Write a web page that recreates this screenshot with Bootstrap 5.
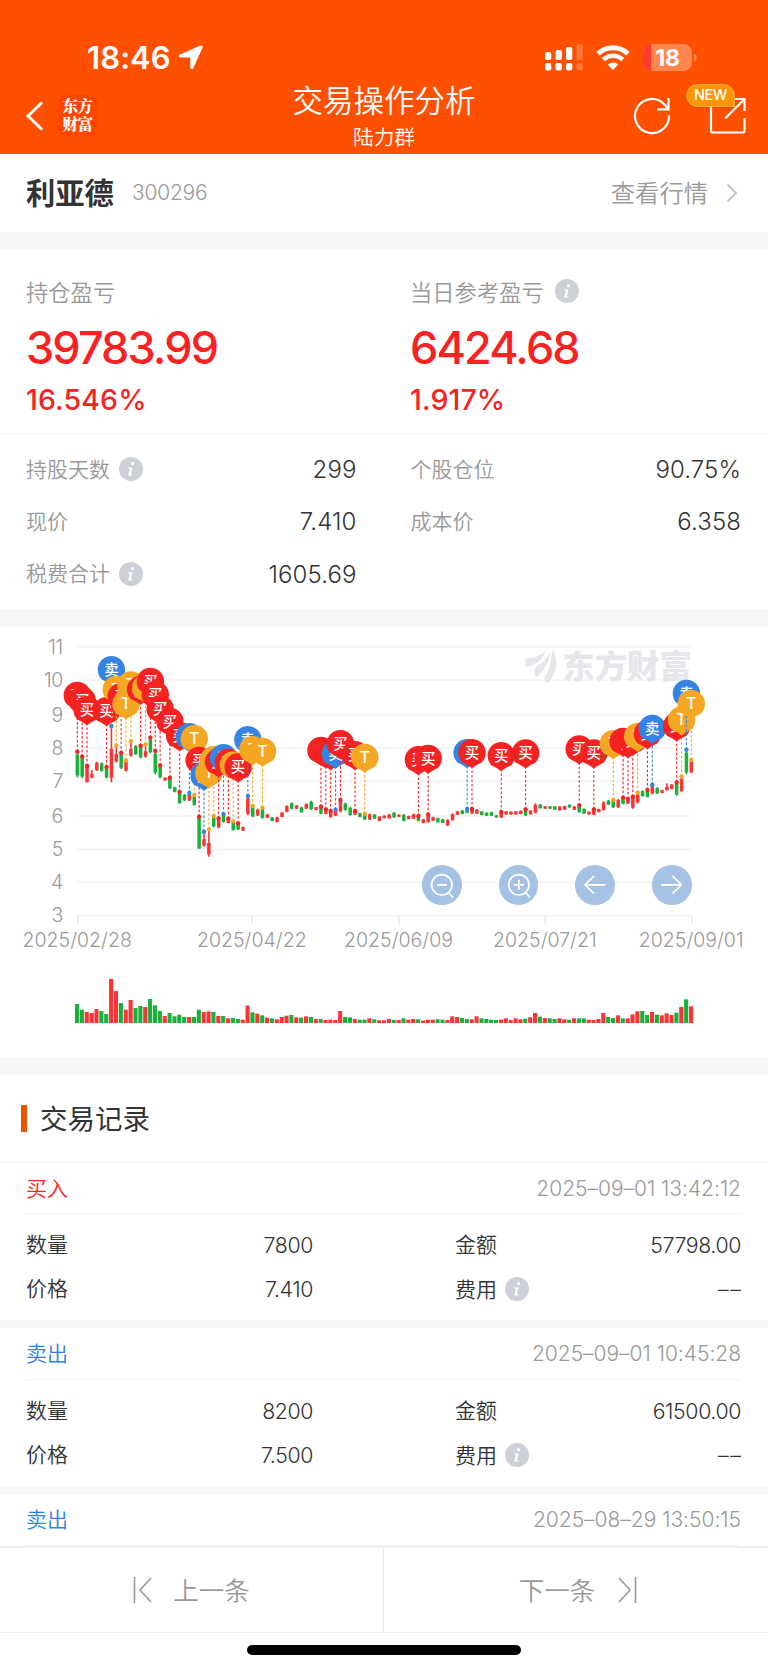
<!DOCTYPE html>
<html lang="zh-CN">
<head>
<meta charset="utf-8">
<meta name="viewport" content="width=device-width, initial-scale=1">
<title>交易操作分析</title>
<link href="https://cdn.jsdelivr.net/npm/bootstrap@5.3.0/dist/css/bootstrap.min.css" rel="stylesheet">
<style>
body{font-family:Inter,"Noto Sans CJK SC",sans-serif;color:#333;background:#fff;width:768px;height:1669px;overflow:hidden;font-size:21px;line-height:1;letter-spacing:-.02em}
svg{display:block;flex:none}
.zh{letter-spacing:0;font-family:"Noto Sans CJK SC",sans-serif;font-weight:350;white-space:nowrap;padding-bottom:2px}
.muted{color:#999}
.topbar{height:154px;background:#ff5000;color:#fff}
.status{height:81px;padding:33px 71px 0 87px}
.clock{font-size:31px;font-weight:600;letter-spacing:.003em}
.navrow{height:73px;padding:0 22px 0 25px}
.side{width:150px}
.brand{width:41px;height:41px;border-radius:9px;background:#ff4500;font-size:15.5px;line-height:17.5px;font-weight:900;font-family:"Noto Serif CJK SC","Noto Sans CJK SC",serif;padding-top:2px}
.apptitle{font-size:30.5px;line-height:34px;margin-top:1px}
.subtitle{font-size:20.7px;line-height:26px;margin-top:7px}
.newtag{left:-23px;top:-13px;height:23px;width:49px;border-radius:12px 12px 0 12px;background:#ff9500;border:1px solid #ffab40;font-size:14.5px;font-weight:500;box-shadow:0 1px 3px rgba(160,60,0,.3)}
.stock{height:78px;padding:0 30px 0 26px}
.gap18{height:18px;background:#f7f7f7}
.gap8{height:8px;background:#f7f7f7}
.profit{height:184px;border-bottom:1px solid #f0f0f0;padding:30px 26px 0 26px}
.plabel{font-size:22.3px;height:24px}
.big{font-size:45px;font-weight:500;color:#f92222;letter-spacing:-.042em;margin-top:21px;height:46px;line-height:46px}
.pct{font-size:28.5px;font-weight:500;color:#f92222;letter-spacing:.004em;margin-top:13px;height:32px;line-height:32px}
.facts{height:175px;padding:9px 27px 0 26px}
.fact{height:52.3px}
.fact b{font-weight:350;font-size:24px;letter-spacing:.004em;padding-top:2px}
.f-left{padding-right:27px}
.chartbox{height:431px}
.zoomers{left:422px;top:238px;gap:37.2px}
.zbtn{width:39.5px;height:39.5px;border-radius:50%;background:#a5c2e4;border:0;padding:0}
.sect{height:88px;border-bottom:1px solid #f2f2f2;padding-left:21px}
.mark-bar{width:6px;height:27px;background:#ea5504}
.sect .zh{font-size:27.5px;font-weight:400;margin-left:13px}
.rhead{height:51px;margin:0 27px 0 26px;border-bottom:1px solid #f2f2f2}
.rhead time{font-size:21px;letter-spacing:-.001em;color:#999;font-weight:350}
.rbody{height:106px;padding:9px 27px 0 26px}
.rrow{height:44px}
.rrow b{font-weight:350;font-size:21.3px;letter-spacing:-.018em;padding-top:2px}
.rrow b.nil{letter-spacing:.08em;margin-right:-.08em}
.rl{width:287px}.rr{width:286px}
.buy{color:#f92222}.sell{color:#2f80e4}
.pager{height:87px;border-top:2px solid #eee;border-bottom:1px solid #eee;background:#fff}
.pager .zh{font-size:25.5px}
.pager>div:first-child{border-right:1px solid #e8e8e8}
.homebar{width:274px;height:10px;border-radius:5px;background:#000;margin:12px auto 0}
</style>
</head>
<body>
<svg width="0" height="0" class="position-absolute"><defs>
<symbol id="info" viewBox="0 0 24 24"><circle cx="12" cy="12" r="12" fill="#cdd0d6"/><circle cx="13.6" cy="6.7" r="1.6" fill="#fff"/><path d="M9.2 10.4h4.200l-1.700 7.100h2l-.3 1H9.200l1.800-7.100H9z" fill="#fff"/></symbol>
</defs></svg>

<header class="topbar">
  <div class="status d-flex justify-content-between align-items-start">
    <div class="d-flex align-items-center" style="height:48px"><span class="clock">18:46</span>
      <svg style="margin-left:7px" width="25" height="25" viewBox="0 0 25 25"><path d="M24 .8c.8.4.9 1 .5 2L15.300 23c-.8 1.800-3 1.500-3-.5V13.200c0-.4-.2-.6-.6-.6H2.400C.3 12.600.1 10.300 2 9.500L22 .8c.8-.3 1.500-.3 2 0z" fill="#fff"/></svg></div>
    <div class="d-flex align-items-center" style="height:48px">
      <svg width="38" height="28" viewBox="0 0 38 28" fill="#fff"><rect x="0" y="9" width="6.300" height="8" rx="2"/><rect x="10.500" y="7" width="6.300" height="10" rx="2"/><rect x="21" y="4" width="6.300" height="13" rx="2"/><rect x="31.500" y="1" width="6.300" height="16" rx="2" opacity=".22"/><rect x="0" y="20" width="6.300" height="7.500" rx="2"/><rect x="10.500" y="20" width="6.300" height="7.500" rx="2"/><rect x="21" y="20" width="6.300" height="7.500" rx="2"/><rect x="31.500" y="20" width="6.300" height="7.500" rx="2" opacity=".22"/></svg>
      <svg style="margin-left:13px" width="34" height="25" viewBox="0 0 34 25" fill="none" stroke="#fff"><path d="M2 8.800a21.500 21.500 0 0 1 30 0" stroke-width="5"/><path d="M7.300 14.700a13.600 13.600 0 0 1 19.400 0" stroke-width="4.500"/><path d="M17 25l-5.300-5.400a7.600 7.600 0 0 1 10.600 0z" fill="#fff" stroke="none"/></svg>
      <svg style="margin-left:13px" width="54" height="27" viewBox="0 0 54 27"><clipPath id="bat"><rect width="49" height="27" rx="8.500"/></clipPath><g clip-path="url(#bat)"><rect width="49" height="27" fill="#ff864e"/><rect width="8" height="27" fill="#ff3a30"/></g><path d="M51 9.500c3.500 1 3.500 7 0 8z" fill="#ff864e"/><text x="24.500" y="21.800" text-anchor="middle" font-size="23" font-weight="700" fill="#fff" letter-spacing="-.2">18</text></svg>
    </div>
  </div>
  <div class="navrow d-flex justify-content-between">
    <div class="side d-flex" style="padding-top:14px">
      <svg style="margin-top:6px" width="19" height="30" viewBox="0 0 19 30"><path d="M17 1.500 3 15l14 13.500" fill="none" stroke="#fff" stroke-width="3"/></svg>
      <div class="brand text-center" style="margin-left:13px">东方<br>财富</div>
    </div>
    <div class="text-center zh" style="margin-left:-3px"><div class="apptitle">交易操作分析</div><div class="subtitle">陆力群</div></div>
    <div class="side d-flex justify-content-end" style="padding-top:15.500px">
      <svg width="38" height="38" viewBox="0 0 38 38" fill="none" stroke="#fff" stroke-width="2.200"><path d="M36 18.500A17 17 0 1 1 31.500 7.500L35.500 12.300M35.500 1v11.300H24.300"/></svg>
      <div class="position-relative" style="margin-left:38px">
        <svg width="37" height="38" viewBox="0 0 37 38" fill="none" stroke="#fff" stroke-width="2.200"><path d="M2 6v27.500q0 2 2 2h29.500q2 0 2-2V21M16 21.500 34.500 3M24 2h11.500v12"/></svg>
        <div class="newtag position-absolute d-flex align-items-center justify-content-center">NEW</div>
      </div>
    </div>
  </div>
</header>

<section class="stock d-flex align-items-center justify-content-between">
  <div class="d-flex align-items-center"><span class="zh" style="font-size:29.300px;font-weight:700">利亚德</span><span class="muted" style="font-size:21px;margin-left:18px;font-weight:300;letter-spacing:-.01em">300296</span></div>
  <div class="d-flex align-items-center muted"><span class="zh" style="font-size:24.300px">查看行情</span><svg style="margin-left:18px" width="12" height="20" viewBox="0 0 12 20"><path d="M1.500 1.500 10 10l-8.500 8.500" fill="none" stroke="#c4c4c8" stroke-width="2"/></svg></div>
</section>
<div class="gap18"></div>

<section class="profit">
  <div class="row g-0">
    <div class="col-6"><div class="plabel zh muted d-flex align-items-center">持仓盈亏</div><div class="big">39783.99</div><div class="pct">16.546%</div></div>
    <div class="col-6" style="padding-left:26px"><div class="plabel zh muted d-flex align-items-center">当日参考盈亏<svg style="margin-left:11px" width="24" height="24"><use href="#info"/></svg></div><div class="big">6424.68</div><div class="pct">1.917%</div></div>
  </div>
</section>
<section class="facts">
  <div class="row g-0">
    <div class="col-6 f-left"><div class="fact d-flex align-items-center justify-content-between"><span class="zh muted d-flex align-items-center">持股天数<svg style="margin:2px 0 0 9px" width="24" height="24"><use href="#info"/></svg></span><b>299</b></div></div>
    <div class="col-6" style="padding-left:27px"><div class="fact d-flex align-items-center justify-content-between"><span class="zh muted">个股仓位</span><b>90.75%</b></div></div>
    <div class="col-6 f-left"><div class="fact d-flex align-items-center justify-content-between"><span class="zh muted">现价</span><b>7.410</b></div></div>
    <div class="col-6" style="padding-left:27px"><div class="fact d-flex align-items-center justify-content-between"><span class="zh muted">成本价</span><b>6.358</b></div></div>
    <div class="col-6 f-left"><div class="fact d-flex align-items-center justify-content-between"><span class="zh muted d-flex align-items-center">税费合计<svg style="margin:2px 0 0 9px" width="24" height="24"><use href="#info"/></svg></span><b>1605.69</b></div></div>
  </div>
</section>
<div class="gap18"></div>

<section class="chartbox position-relative">
  <svg id="chart" width="768" height="431" viewBox="0 627 768 431"></svg>
  <div class="zoomers position-absolute d-flex">
    <button class="zbtn" aria-label="缩小"><svg width="39.500" height="39.500" viewBox="0 0 39.500 39.500" fill="none" stroke="#fff" stroke-width="1.700"><circle cx="19.800" cy="19.800" r="10.200"/><path d="M15 19.800h10M26 27l5 5.500"/></svg></button>
    <button class="zbtn" aria-label="放大"><svg width="39.500" height="39.500" viewBox="0 0 39.500 39.500" fill="none" stroke="#fff" stroke-width="1.700"><circle cx="19.800" cy="19.800" r="10.200"/><path d="M14.800 19.800h10M19.800 14.800v10M26 27l5 5.500"/></svg></button>
    <button class="zbtn" aria-label="左移"><svg width="39.500" height="39.500" viewBox="0 0 39.500 39.500" fill="none" stroke="#fff" stroke-width="1.700"><path d="M30.500 19.800H10M19 11l-9 8.800 9 8.800"/></svg></button>
    <button class="zbtn" aria-label="右移"><svg width="39.500" height="39.500" viewBox="0 0 39.500 39.500" fill="none" stroke="#fff" stroke-width="1.700"><path d="M9 19.800h20.500M20.500 11l9 8.800-9 8.800"/></svg></button>
  </div>
</section>
<div class="gap18" style="height:17px"></div>

<section class="sect d-flex align-items-center"><div class="mark-bar"></div><span class="zh">交易记录</span></section>

<article>
  <div class="rhead d-flex align-items-center justify-content-between"><span class="zh buy">买入</span><time>2025–09–01 13:42:12</time></div>
  <div class="rbody">
    <div class="rrow d-flex justify-content-between align-items-center"><div class="rl d-flex justify-content-between align-items-center"><span class="zh">数量</span><b>7800</b></div><div class="rr d-flex justify-content-between align-items-center"><span class="zh">金额</span><b>57798.00</b></div></div>
    <div class="rrow d-flex justify-content-between align-items-center"><div class="rl d-flex justify-content-between align-items-center"><span class="zh">价格</span><b>7.410</b></div><div class="rr d-flex justify-content-between align-items-center"><span class="zh d-flex align-items-center">费用<svg style="margin:2px 0 0 8px" width="24" height="24"><use href="#info"/></svg></span><b class="nil">––</b></div></div>
  </div>
</article>
<div class="gap8"></div>
<article>
  <div class="rhead d-flex align-items-center justify-content-between" style="height:52px"><span class="zh sell">卖出</span><time>2025–09–01 10:45:28</time></div>
  <div class="rbody">
    <div class="rrow d-flex justify-content-between align-items-center"><div class="rl d-flex justify-content-between align-items-center"><span class="zh">数量</span><b>8200</b></div><div class="rr d-flex justify-content-between align-items-center"><span class="zh">金额</span><b>61500.00</b></div></div>
    <div class="rrow d-flex justify-content-between align-items-center"><div class="rl d-flex justify-content-between align-items-center"><span class="zh">价格</span><b>7.500</b></div><div class="rr d-flex justify-content-between align-items-center"><span class="zh d-flex align-items-center">费用<svg style="margin:2px 0 0 8px" width="24" height="24"><use href="#info"/></svg></span><b class="nil">––</b></div></div>
  </div>
</article>
<div class="gap8"></div>
<article><div class="rhead d-flex align-items-center justify-content-between" style="height:52px"><span class="zh sell">卖出</span><time>2025–08–29 13:50:15</time></div></article>

<nav class="pager row g-0 muted">
  <div class="col-6 d-flex align-items-center justify-content-center"><svg width="20" height="26" viewBox="0 0 20 26" fill="none" stroke="#999" stroke-width="1.600"><path d="M1.500 0v26M18 1 7 13l11 12"/></svg><span class="zh" style="margin-left:20px">上一条</span></div>
  <div class="col-6 d-flex align-items-center justify-content-center"><span class="zh ms-1">下一条</span><svg style="margin-left:22px" width="20" height="26" viewBox="0 0 20 26" fill="none" stroke="#999" stroke-width="1.600"><path d="M18.500 0v26M2 1l11 12L2 25"/></svg></div>
</nav>
<div class="homebar"></div>

<script src="https://cdn.jsdelivr.net/npm/bootstrap@5.3.0/dist/js/bootstrap.bundle.min.js"></script>
<script>
// Daily bars: direction (G down / R up), volume, high and low in thirds of a pixel below the plot origin
const days = `G57 395 472,G40 408 475,R33 440 487,R30 450 475,R42 425 453,G36 427 455,G27 442 475,R132 318 487,R96 378 428,G60 400 447,R40 420 455,R69 364 410,G45 375 405,G51 377 415,R48 375 413,G72 354 400,G53 393 463,G36 436 475,R21 472 482,G30 473 508,G20 500 517,G25 516 552,G18 522 543,R18 519 543,G18 527 557,G40 590 686,R33 635 680,R35 628 710,G33 588 622,R21 595 625,G21 582 608,R14 596 610,G15 604 632,G12 610 630,R10 620 633,R52 528 586,G32 558 592,R28 566 588,G23 563 596,R16 582 594,G14 591 604,R11 590 607,R18 576 592,R22 556 577,G24 547 568,R17 555 567,G16 560 578,R20 550 567,G18 542 570,R12 560 571,G12 560 583,R9 568 583,R10 573 593,R9 570 588,R36 540 577,G18 548 572,G17 560 587,R12 573 585,G10 578 592,G10 582 600,R14 581 600,G11 582 597,R8 588 604,R8 586 595,R12 582 596,G9 576 593,R9 583 591,G14 582 604,R10 587 598,R12 581 597,G11 588 604,R7 597 610,R10 585 608,R10 590 603,G11 593 608,G10 597 609,R9 598 618,R20 580 602,R18 573 585,G15 570 583,G12 567 580,R11 567 582,R20 567 582,G14 573 586,G12 577 588,G10 575 588,G9 585 593,R10 575 594,R14 573 584,R9 574 584,R14 573 584,R11 571 583,G13 568 588,R17 570 584,R30 550 580,G19 552 566,R15 558 567,G14 558 567,G12 558 570,R14 558 572,R11 557 570,G10 553 563,R14 558 570,G14 557 578,G14 565 582,R10 574 584,R9 568 585,R12 566 577,R30 544 572,G18 540 555,G15 540 564,R23 537 564,G14 533 553,R14 537 552,R26 530 566,R35 520 550,G36 511 530,G24 510 532,R33 494 523,G25 502 522,R23 509 520,R29 490 512,R24 492 508,G31 487 527,R48 471 517,G71 389 463,R50 420 460`.split(',');
// Trades: day index, kind (B buy, S sell, T both), dot position
const trades = `0B395 1B410 2B438 6B441 7S318 8T377 9B399 10T421 11T364 13B377 14T373 15B353 16B393 17B436 19B473 21B516 23S519 24T525 25B590 26S635 27T628 28T588 29B595 30S582 31B596 32T604 33B610 35S528 36T558 38T563 50B560 51B568 52B573 53S569 54B540 57B573 59T581 70B588 72B584 80S567 81B567 87B576 92B568 103B556 106B568 110T540 112B533 113B537 114B530 115T518 117B510 118S494 123B487 124T469 125S389 126T420`.split(' ');
const X = i => 77.3 + i * 4.873, Y = v => 620 + v / 3;
const col = {R:'#ff3236', G:'#19b03c'}, pin = {B:'#f52222', S:'#3583e2', T:'#f5a623'}, label = {B:'买', S:'卖', T:'T'};
let s = '';
[646.7,680,714.7,748,781.3,816,849.5,882.3,915.5].forEach((y, k) => {
  s += `<path d="M77 ${y}H691" stroke="#f3f3f3" stroke-width="1.400"/><text x="63" y="${y + 6.8}" text-anchor="end" font-size="19.500" font-weight="350" fill="#999" letter-spacing="-.3">${11 - k}</text>`;
});
[[77.7,'2025/02/28'],[252.3,'2025/04/22'],[399,'2025/06/09'],[545.3,'2025/07/21'],[691.7,'2025/09/01']].forEach(([x, t]) => {
  s += `<path d="M${x} 916v8.500" stroke="#e8e8e8" stroke-width="1.400"/><text x="${x - .5}" y="946.500" text-anchor="middle" font-size="19.500" font-weight="350" fill="#999" letter-spacing=".03">${t}</text>`;
});
s += `<g fill="#e6e6eb"><path d="M525.500 659q13-2 20-8-1 7-9 12-6 4-10.500 4z"/><path d="M534 672q1-6 8-9 6-5 8-13 1 13-13 27-3-2-3-5z"/><path d="M548 683q-3-1-4-5 7-8 8-28 6 8 4 17-2 9-8 16z"/><text x="562.500" y="678.300" font-size="32.300" font-weight="900" letter-spacing="0" style="font-family:'Noto Sans CJK SC',sans-serif">东方财富</text></g>`;
days.forEach((d, i) => {
  const [a, hi, lo] = d.split(' ').map((v, k) => k ? Y(+v) : v), c = col[a[0]], x = X(i), h = lo - hi, v = a.slice(1) / 3;
  let t = hi + h * .12, b = lo - h * .08;
  if ([3,8,11,14,26,27,121].includes(i)) t = hi + h * .5;
  if (i === 7) t = hi + 23;
  if (i === 2 || i === 25) t = hi, b = lo;
  s += `<path d="M${x} ${hi}V${lo}" stroke="${c}" stroke-width="1.600"/><path d="M${x} ${t}V${b}" stroke="${c}" stroke-width="3.500"/><path d="M${x - .3} ${1023 - v}V1023" stroke="${c}" stroke-width="4.100"/>`;
});
trades.forEach(t => {
  const [, i, k, v] = t.match(/(\d+)([BST])(\d+)/), x = X(+i), y = Y(+v), cy = y - 56.3, c = pin[k];
  s += `<path d="M${x} ${y}V${cy + 15}" stroke="${c}" stroke-width="1.100" stroke-dasharray="2.600 1.900"/><circle cx="${x}" cy="${y}" r="2.200" fill="${c}"/><path d="M${x - 9.7} ${cy + 9.7}A13.700 13.700 0 1 1 ${x + 9.7} ${cy + 9.7}Q${x + 3} ${cy + 13} ${x} ${cy + 15.5}Q${x - 3} ${cy + 13} ${x - 9.7} ${cy + 9.7}z" fill="${c}"/><text x="${x}" y="${cy + 5.3}" text-anchor="middle" font-size="${k === 'T' ? 16 : 14.5}" font-weight="500" letter-spacing="0" fill="#fff">${label[k]}</text>`;
});
document.getElementById('chart').innerHTML = s;
</script>
</body>
</html>
